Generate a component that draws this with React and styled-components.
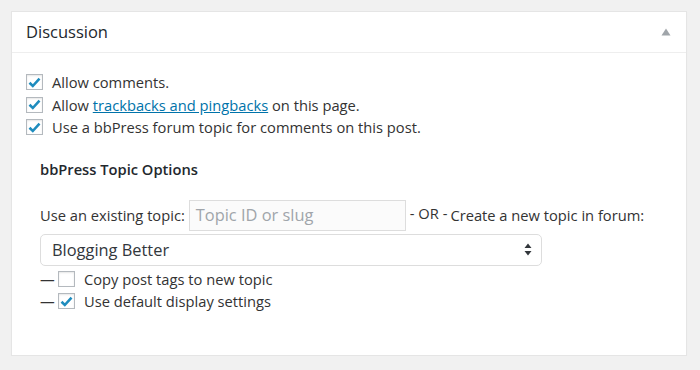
import React from "react";
import styled, { createGlobalStyle } from "styled-components";

const Global = createGlobalStyle`
  html, body { margin: 0; padding: 0; background: #f1f1f1; }
  body { font-family: "Open Sans", "Noto Sans", sans-serif; color: #444; font-size: 14.7px; }
`;

const Page = styled.div`
  padding: 11px 0 0 11px;
`;

const Panel = styled.div`
  box-sizing: border-box;
  width: 676px;
  height: 345px;
  background: #fff;
  border: 1px solid #e5e5e5;
  box-shadow: 0 1px 1px rgba(0, 0, 0, 0.04);
`;

const Header = styled.div`
  display: flex;
  align-items: center;
  justify-content: space-between;
  height: 40px;
  padding: 0 15px 0 14px;
  border-bottom: 1px solid #eee;
`;

const Title = styled.h3`
  margin: 0;
  font-size: 16.5px;
  font-weight: 400;
  color: #23282d;
  line-height: 20px;
`;

const Body = styled.div`
  padding: 18px 14px 0 14px;
`;

const Row = styled.label`
  display: flex;
  align-items: center;
  height: 22.5px;
  line-height: 20px;
  color: #333;
`;

const Box = styled.span`
  box-sizing: border-box;
  display: inline-flex;
  align-items: center;
  justify-content: center;
  width: 17px;
  height: 16px;
  margin-right: 9px;
  border: 1px solid #b4b9be;
  background: #fff;
  box-shadow: inset 0 1px 2px rgba(0, 0, 0, 0.1);
  flex: none;
`;

const Link = styled.a`
  color: #0073aa;
  text-decoration: underline;
`;

const Sub = styled.div`
  padding-left: 14px;
`;

const SubTitle = styled.h4`
  margin: 20px 0 0;
  font-size: 14.7px;
  font-weight: 600;
  color: #23282d;
  line-height: 20px;
`;

const TopicRow = styled.div`
  display: flex;
  align-items: center;
  margin-top: 21px;
  color: #333;
  line-height: 20px;
`;

const Input = styled.div`
  box-sizing: border-box;
  width: 217px;
  height: 31px;
  margin: 0 4px 0 4px;
  border: 1px solid #ddd;
  background: #fbfbfb;
  color: #a0a5aa;
  font-size: 16.4px;
  padding: 0 6px;
  display: flex;
  align-items: center;
`;

const Or = styled.span`
  position: relative;
  top: -2px;
  margin-right: 3px;
`;

const Select = styled.div`
  box-sizing: border-box;
  margin-top: 3px;
  width: 502px;
  height: 32px;
  border: 1px solid #ddd;
  border-radius: 5px;
  background: #fff;
  display: flex;
  align-items: center;
  justify-content: space-between;
  padding: 0 9px 0 11px;
  font-size: 16.4px;
  color: #32373c;
`;

const Options = styled.div`
  margin-top: 2px;
`;

const Dash = styled.span`
  color: #333;
  width: 14px;
  margin-right: 4px;
  display: inline-block;
`;

const Check = () => (
  <svg width="13" height="11" viewBox="0 0 13 11">
    <path d="M1.5 5.8 L4.8 9 L11.5 1.6" fill="none" stroke="#1e8cbe" strokeWidth="2.6" />
  </svg>
);

const CheckBox = ({ checked }) => <Box>{checked && <Check />}</Box>;

export default function App() {
  return (
    <Page>
      <Global />
      <Panel>
        <Header>
          <Title>Discussion</Title>
          <svg width="10" height="8" viewBox="0 0 10 8">
            <path d="M5 0.5 L9.5 7.5 L0.5 7.5 Z" fill="#a0a5aa" />
          </svg>
        </Header>
        <Body>
          <Row>
            <CheckBox checked />
            <span>Allow comments.</span>
          </Row>
          <Row>
            <CheckBox checked />
            <span>
              Allow <Link>trackbacks and pingbacks</Link> on this page.
            </span>
          </Row>
          <Row>
            <CheckBox checked />
            <span>Use a bbPress forum topic for comments on this post.</span>
          </Row>
          <Sub>
            <SubTitle>bbPress Topic Options</SubTitle>
            <TopicRow>
              <span>Use an existing topic:</span>
              <Input>Topic ID or slug</Input>
              <Or>- OR -</Or>
              <span>Create a new topic in forum:</span>
            </TopicRow>
            <Select>
              <span>Blogging Better</span>
              <svg width="8" height="13" viewBox="0 0 8 13">
                <path d="M4 0.5 L7.5 5 L0.5 5 Z M0.5 8 L7.5 8 L4 12.5 Z" fill="#32373c" />
              </svg>
            </Select>
            <Options>
              <Row>
                <Dash>—</Dash>
                <CheckBox />
                <span>Copy post tags to new topic</span>
              </Row>
              <Row>
                <Dash>—</Dash>
                <CheckBox checked />
                <span>Use default display settings</span>
              </Row>
            </Options>
          </Sub>
        </Body>
      </Panel>
    </Page>
  );
}
